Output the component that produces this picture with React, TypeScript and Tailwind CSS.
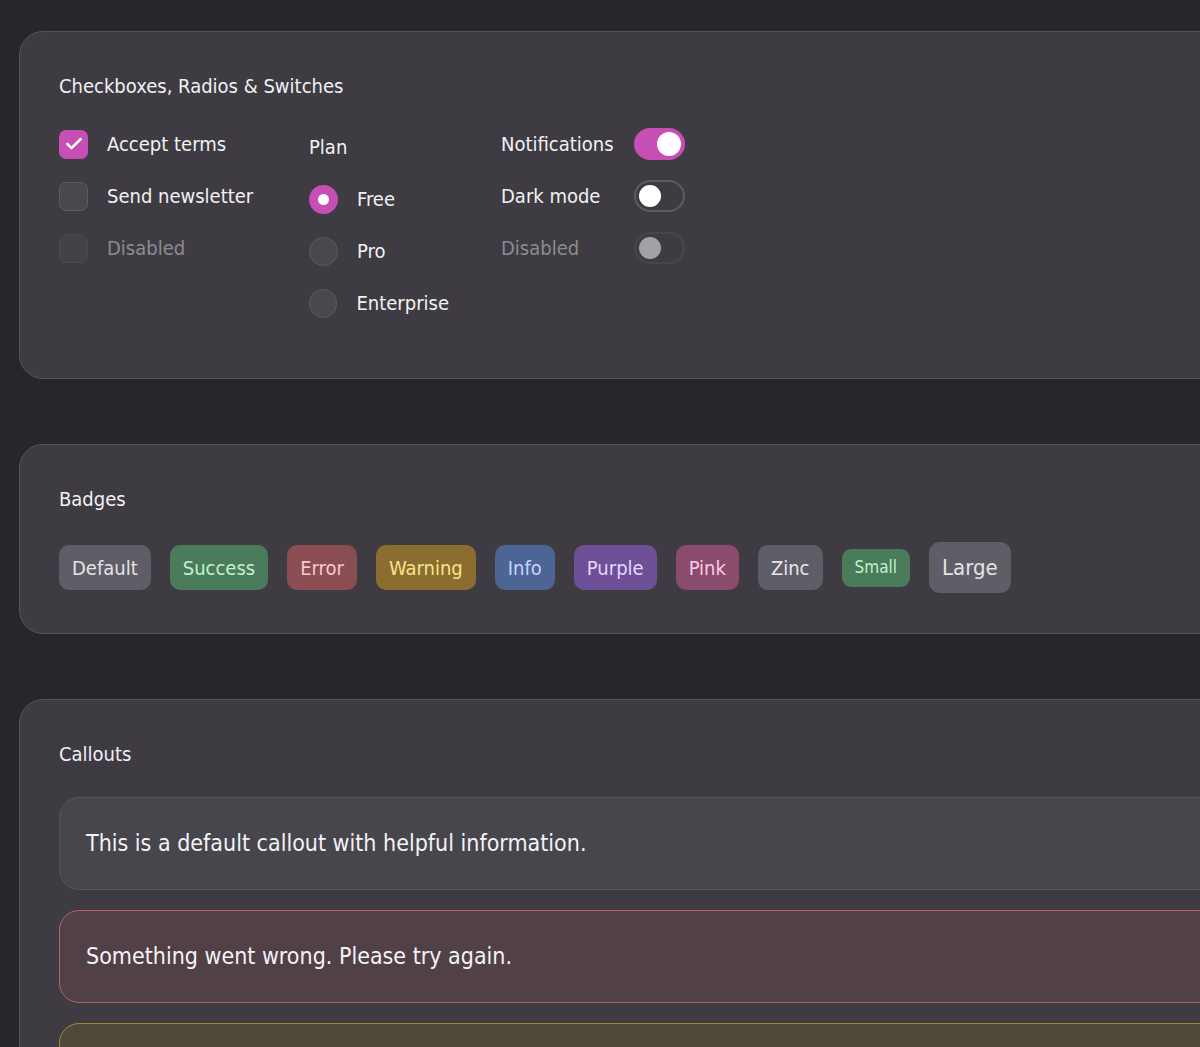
import { Check } from 'lucide-react';

const font = { fontFamily: '"Liberation Sans Narrow", "DejaVu Sans Condensed", sans-serif' };

function Checkbox({ label, checked, disabled }: { label: string; checked?: boolean; disabled?: boolean }) {
  return (
    <div className="flex items-center gap-[19px] h-8">
      <div
        className={
          checked
            ? 'w-[29px] h-[29px] rounded-[7px] bg-[#c64fb5] flex items-center justify-center'
            : disabled
              ? 'w-[29px] h-[29px] rounded-[7px] bg-[#444248] border border-[#4b4950]'
              : 'w-[29px] h-[29px] rounded-[7px] bg-[#4a484f] border border-[#5c5a61]'
        }
      >
        {checked && <Check size={20} strokeWidth={3} className="text-white" />}
      </div>
      <span className={disabled ? 'text-[20px] text-[#8d8b92]' : 'text-[20px] text-[#f2f1f4]'}>{label}</span>
    </div>
  );
}

function Radio({ label, selected }: { label: string; selected?: boolean }) {
  return (
    <div className="flex items-center gap-[19px] h-8">
      <div
        className={
          selected
            ? 'w-[29px] h-[29px] rounded-full bg-[#c64fb5] flex items-center justify-center'
            : 'w-[29px] h-[29px] rounded-full bg-[#4a484f] border border-[#5c5a61]'
        }
      >
        {selected && <div className="w-[11px] h-[11px] rounded-full bg-white" />}
      </div>
      <span className="text-[20px] text-[#f2f1f4]">{label}</span>
    </div>
  );
}

function Switch({ label, on, disabled }: { label: string; on?: boolean; disabled?: boolean }) {
  let track = 'w-[51px] h-[32px] rounded-full border-2 border-[#5e5c63] flex items-center px-[3px]';
  let knob = 'w-[22px] h-[22px] rounded-full bg-white';
  if (on) {
    track = 'w-[51px] h-[32px] rounded-full bg-[#c64fb5] flex items-center justify-end px-[4px]';
    knob = 'w-[24px] h-[24px] rounded-full bg-white';
  } else if (disabled) {
    track = 'w-[51px] h-[32px] rounded-full border-2 border-[#48464c] flex items-center px-[3px]';
    knob = 'w-[22px] h-[22px] rounded-full bg-[#a3a1a7]';
  }
  return (
    <div className="flex items-center justify-between gap-5 h-8 w-[184px]">
      <span className={disabled ? 'text-[20px] text-[#8d8b92]' : 'text-[20px] text-[#f2f1f4]'}>{label}</span>
      <div className={track}>
        <div className={knob} />
      </div>
    </div>
  );
}

const badges = [
  { label: 'Default', cls: 'bg-[#5f5d66] text-[#e4e3e8]' },
  { label: 'Success', cls: 'bg-[#4a7b5a] text-[#c4f0d0]' },
  { label: 'Error', cls: 'bg-[#8a4d54] text-[#f6c9cc]' },
  { label: 'Warning', cls: 'bg-[#8a6d2f] text-[#fbe38a]' },
  { label: 'Info', cls: 'bg-[#4c6595] text-[#c3d6ff]' },
  { label: 'Purple', cls: 'bg-[#6d5097] text-[#e6d6ff]' },
  { label: 'Pink', cls: 'bg-[#8a4b6d] text-[#f9cbe2]' },
  { label: 'Zinc', cls: 'bg-[#5f5d66] text-[#e6e6ea]' },
];

function Card({ title, children, className }: { title: string; children: React.ReactNode; className?: string }) {
  return (
    <section className={'w-[1300px] shrink-0 rounded-[24px] border border-[#56545b] bg-[#3e3c42] px-[39px] pt-10 ' + className}>
      <h2 className="text-[20px] leading-[28px] text-[#f2f1f4]">{title}</h2>
      {children}
    </section>
  );
}

export default function App() {
  return (
    <div className="w-full h-screen overflow-hidden bg-[#28262b] pl-[19px] pt-[31px]" style={font}>
      <div className="flex flex-col gap-[65px]">
        <Card title="Checkboxes, Radios & Switches" className="pb-[59px]">
          <div className="mt-[28px] flex gap-[52px]">
            <div className="flex flex-col gap-5 w-[198px]">
              <Checkbox label="Accept terms" checked />
              <Checkbox label="Send newsletter" />
              <Checkbox label="Disabled" disabled />
            </div>
            <div className="flex flex-col gap-5 w-[140px]">
              <div className="h-8 mt-[3px] flex items-center text-[20px] text-[#f2f1f4]">Plan</div>
              <Radio label="Free" selected />
              <Radio label="Pro" />
              <Radio label="Enterprise" />
            </div>
            <div className="flex flex-col gap-5">
              <Switch label="Notifications" on />
              <Switch label="Dark mode" />
              <Switch label="Disabled" disabled />
            </div>
          </div>
        </Card>

        <Card title="Badges" className="pb-10">
          <div className="mt-[29px] flex items-center gap-[19px] h-[51px]">
            {badges.map((b) => (
              <span key={b.label} className={'h-[45px] px-[13px] rounded-[10px] flex items-center text-[20px] ' + b.cls}>
                {b.label}
              </span>
            ))}
            <span className="h-[38px] px-[13px] rounded-[9px] flex items-center text-[17px] bg-[#4a7b5a] text-[#c4f0d0]">Small</span>
            <span className="h-[51px] px-[13px] rounded-[11px] flex items-center text-[22px] bg-[#5f5d66] text-[#e4e3e8]">Large</span>
          </div>
        </Card>

        <Card title="Callouts" className="pb-10">
          <div className="mt-[29px] flex flex-col gap-5">
            <div className="rounded-[20px] border border-[#56545b] bg-[#48464d] px-[26px] py-[30px] text-[23px] leading-[31px] text-[#f4f3f6]">
              This is a default callout with helpful information.
            </div>
            <div className="rounded-[20px] border border-[#b3636c] bg-[#524047] px-[26px] py-[30px] text-[23px] leading-[31px] text-[#f4f3f6]">
              Something went wrong. Please try again.
            </div>
            <div className="rounded-[20px] border border-[#a08b2c] bg-[#4f4939] px-[26px] py-[30px] text-[23px] leading-[31px] text-[#f4f3f6]">
              Please review your settings before continuing.
            </div>
          </div>
        </Card>
      </div>
    </div>
  );
}
